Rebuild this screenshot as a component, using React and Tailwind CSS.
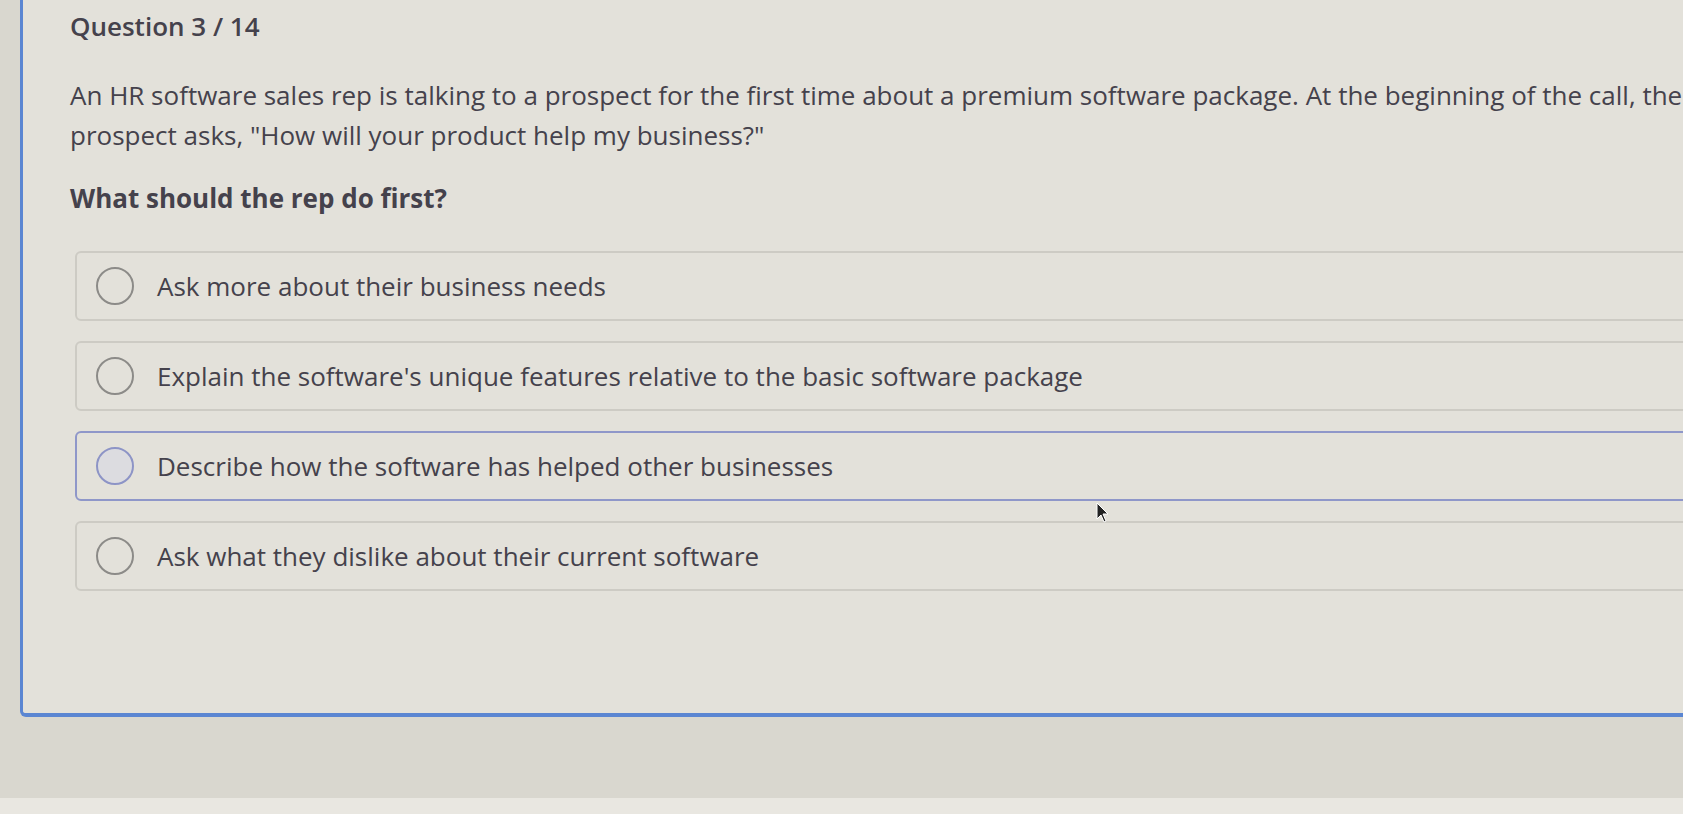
import React from "react";

const options = [
  "Ask more about their business needs",
  "Explain the software's unique features relative to the basic software package",
  "Describe how the software has helped other businesses",
  "Ask what they dislike about their current software",
];

const Option = ({ label, active }) => (
  <div
    className={`flex items-center gap-[23px] h-[70px] w-[1700px] rounded-md border-2 pl-[19px] ${
      active ? "border-[#8f97c9]" : "border-[#cdcbc4]"
    }`}
  >
    <span
      className={`block w-[38px] h-[38px] rounded-full border-2 ${
        active ? "border-[#8d94c6] bg-[#dcdce0]" : "border-[#8c8b88]"
      }`}
    />
    <span className="text-[26px] leading-[40px] text-[#45424c]">{label}</span>
  </div>
);

export default function App() {
  return (
    <div className="relative h-[814px] w-full overflow-hidden bg-[#d9d7cf] flex flex-col font-['Open_Sans',sans-serif]">
      <div className="h-[717px] pl-[20px] shrink-0">
        <div className="h-full w-[1800px] border-l-[3px] border-b-[4px] border-[#5b86d2] rounded-bl-md bg-[#e3e1da] pl-[47px] pt-[6px] text-[#45424c]">
          <h1 className="text-[26px] leading-[40px] font-semibold">Question 3 / 14</h1>
          <p className="mt-[29px] text-[26px] leading-[40px]">
            An HR software sales rep is talking to a prospect for the first time about a premium software package. At the beginning of the call, the
            <br />
            prospect asks, "How will your product help my business?"
          </p>
          <p className="mt-[23px] text-[26px] leading-[40px] font-bold">What should the rep do first?</p>
          <div className="mt-[33px] ml-[5px] flex flex-col gap-[20px]">
            {options.map((o, i) => (
              <Option key={i} label={o} active={i === 2} />
            ))}
          </div>
        </div>
      </div>
      <div className="flex-1" />
      <div className="h-[16px] bg-[#e9e7e1]" />

      <svg
        className="absolute left-[1096px] top-[502px]"
        width="14"
        height="22"
        viewBox="0 0 14 22"
      >
        <path d="M1 1 L1 17 L5 13 L8 20 L10 19 L7 12 L12 12 Z" fill="#222" stroke="#fff" strokeWidth="1" />
      </svg>
    </div>
  );
}
